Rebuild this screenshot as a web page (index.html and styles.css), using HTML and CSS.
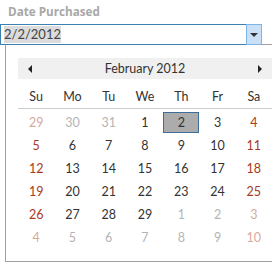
FILE: index.html
```html
<!DOCTYPE html>
<html lang="en">
<head>
  <meta charset="UTF-8" />
  <title>Date Purchased</title>
  <link rel="stylesheet" href="styles.css">
</head>
<body>
  <div class="field">
    <label class="field-label">Date Purchased</label>
    <div class="combo">
      <div class="combo-text"><span class="sel">2/2/2012</span></div>
      <div class="combo-btn"><span class="down"></span></div>
    </div>

    <div class="popup">
      <div class="cal-head">
        <span class="prev"></span>
        <span class="title">February 2012</span>
        <span class="next"></span>
      </div>
      <div class="dow">
        <span>Su</span><span>Mo</span><span>Tu</span><span>We</span><span>Th</span><span>Fr</span><span>Sa</span>
      </div>
      <div class="days" id="days"></div>
    </div>
  </div>

<script>
  // february 2012 starts on wednesday, show 6 weeks from jan 29
  const days = document.getElementById('days');
  const list = [29, 30, 31];
  for (let d = 1; d <= 29; d++) list.push(d);
  for (let d = 1; list.length < 42; d++) list.push(d);

  list.forEach((n, i) => {
    const cell = document.createElement('span');
    const other = i < 3 || i >= 32;
    const weekend = i % 7 === 0 || i % 7 === 6;
    cell.className = 'day' + (other ? ' other' : '') + (weekend ? ' weekend' : '');
    if (!other && n === 2) cell.className += ' selected';
    cell.textContent = n;
    days.appendChild(cell);
  });
</script>
</body>
</html>
```

FILE: styles.css
```css
body {
  margin: 0;
  width: 272px;
  height: 264px;
  overflow: hidden;
  background: #fff;
  font-family: Lato, 'Open Sans', sans-serif;
  font-size: 12.5px;
  color: #333;
}
.field-label {
  display: block;
  height: 24px;
  line-height: 22px;
  padding-left: 8px;
  font-family: 'Open Sans', sans-serif;
  font-size: 11.7px;
  font-weight: bold;
  color: #a8a8a8;
}
.combo {
  position: relative;
  z-index: 1;
  display: flex;
  width: 260px;
  height: 19px;
  border: 1px solid #3c7fb1;
  background: #fff;
  font-size: 13px;
}
.combo-text {
  flex: 1;
  padding: 1px 0 0 3px;
  line-height: 17px;
  color: #444;
}
.sel {
  background: #dcdcdc;
  display: inline-block;
}
.combo-btn {
  width: 14px;
  border: 1px solid #7eb4ea;
  margin: -1px -1px -1px 0;
  background: #c9e0f7;
  display: flex;
  align-items: center;
  justify-content: center;
}
.down {
  width: 0;
  height: 0;
  border-left: 4px solid transparent;
  border-right: 4px solid transparent;
  border-top: 4px solid #333;
}
.popup {
  margin: -1px 0 0 5px;
  width: 254px;
  padding: 13px 12px 12px 12px;
  border: 1px solid #a0a0a0;
  border-right: none;
  background: #fff;
}
.cal-head {
  height: 21px;
  background: #f0f0f0;
  display: flex;
  align-items: center;
  justify-content: space-between;
  padding: 0 10px;
}
.title {
  line-height: 21px;
}
.prev, .next {
  width: 0;
  height: 0;
  border-top: 4px solid transparent;
  border-bottom: 4px solid transparent;
}
.prev {
  border-right: 4px solid #222;
}
.next {
  border-left: 4px solid #222;
}
.dow {
  display: grid;
  grid-template-columns: repeat(7, 1fr);
  padding-top: 7px;
  line-height: 22px;
  border-bottom: 1px solid #ccc;
  text-align: center;
}
.days {
  display: grid;
  grid-template-columns: repeat(7, 1fr);
  grid-auto-rows: 23px;
  margin-top: 2px;
  text-align: center;
}
.day {
  margin: 1px 0;
  border: 1px solid transparent;
  line-height: 20px;
}
.day.weekend {
  color: #a8391c;
}
.day.other {
  color: #b4b4b4;
}
.day.other.weekend {
  color: #d6aa9e;
}
.day.selected {
  background: #acacac;
  border-color: #3d6e99;
}
```
